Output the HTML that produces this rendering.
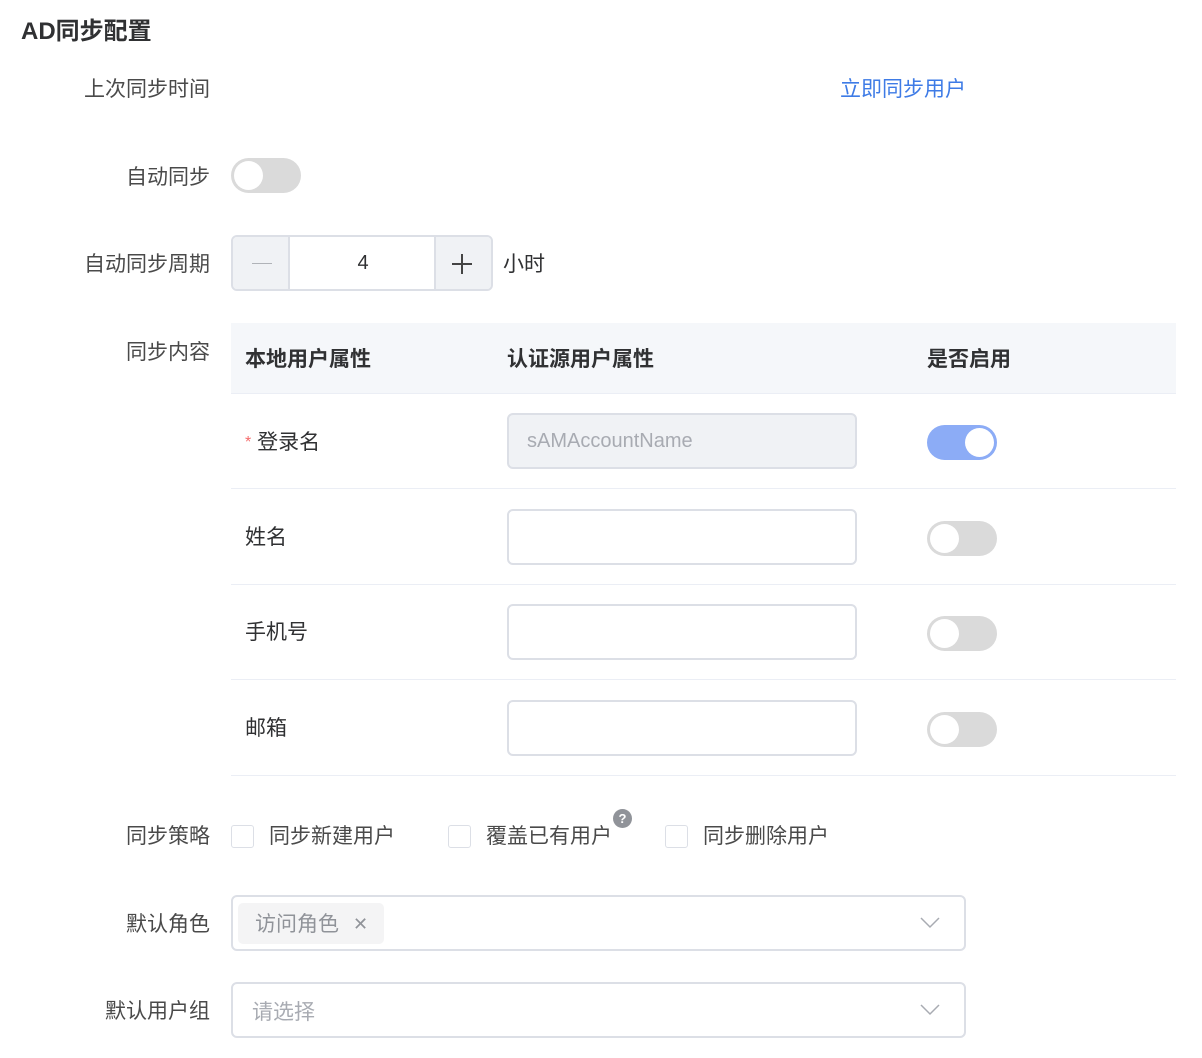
<!DOCTYPE html>
<html><head><meta charset="utf-8"><style>
*{box-sizing:border-box;margin:0;padding:0}
body{width:1202px;height:1058px;background:#fff;position:relative;overflow:hidden;font-family:"Liberation Sans","Noto Sans CJK SC",sans-serif;color:#303133;font-size:21px}
.a{position:absolute;white-space:nowrap;line-height:28px}
.lbl{position:absolute;right:992px;white-space:nowrap;line-height:28px;color:#4a4a4a}
.sw{position:absolute;width:70px;height:35px;border-radius:18px;background:#dadada}
.sw::after{content:"";position:absolute;top:3px;left:3px;width:29px;height:29px;border-radius:50%;background:#fff}
.sw.on{background:#8cacf6}.sw.on::after{left:38px}
.inp{position:absolute;left:507px;width:350px;height:56px;border:2px solid #dcdfe6;border-radius:6px;background:#fff}
.row{position:absolute;left:231px;width:945px;border-bottom:1px solid #ebeef5}
.cb{position:absolute;top:825px;width:23px;height:23px;border:1px solid #dcdfe6;border-radius:3px}
.sel{position:absolute;left:231px;width:735px;height:56px;border:2px solid #dcdfe6;border-radius:6px}
.chev{position:absolute;right:24px;top:20px}
</style></head><body>
<div class="a" style="left:21px;top:18px;font-size:24px;font-weight:bold;color:#303133">AD同步配置</div>
<div class="lbl" style="top:76px">上次同步时间</div>
<div class="a" style="left:840px;top:76px;color:#3e7be6">立即同步用户</div>
<div class="lbl" style="top:164px">自动同步</div>
<div class="sw" style="left:231px;top:158px"></div>
<div class="lbl" style="top:251px">自动同步周期</div>
<div style="position:absolute;left:231px;top:235px;width:262px;height:56px;border:2px solid #dcdfe6;border-radius:6px;background:#fff;overflow:hidden">
 <div style="position:absolute;left:0;top:0;width:57px;height:52px;background:#f0f2f5;border-right:2px solid #dcdfe6"></div>
 <div style="position:absolute;left:19px;top:26px;width:20px;height:1px;background:#b0b3b8"></div>
 <div style="position:absolute;right:0;top:0;width:57px;height:52px;background:#f0f2f5;border-left:2px solid #dcdfe6"></div>
 <div style="position:absolute;right:19px;top:26px;width:20px;height:2px;background:#444"></div>
 <div style="position:absolute;right:28px;top:17px;width:2px;height:20px;background:#444"></div>
 <div class="a" style="left:0;width:260px;text-align:center;top:12px;color:#303133;font-size:20px">4</div>
</div>
<div class="a" style="left:503px;top:251px">小时</div>
<div class="lbl" style="top:339px">同步内容</div>
<div class="row" style="top:323px;height:71px;background:#f5f7fa"></div>
<div class="a" style="left:245px;top:346px;font-weight:bold">本地用户属性</div>
<div class="a" style="left:507px;top:346px;font-weight:bold">认证源用户属性</div>
<div class="a" style="left:927px;top:346px;font-weight:bold">是否启用</div>
<div class="row" style="top:394px;height:95px"></div>
<div class="row" style="top:489px;height:96px"></div>
<div class="row" style="top:585px;height:95px"></div>
<div class="row" style="top:680px;height:96px"></div>
<div class="a" style="left:245px;top:429px"><span style="color:#f56c6c;font-size:16px;vertical-align:top">*</span> 登录名</div>
<div class="inp" style="top:413px;background:#f0f2f5"><span class="a" style="left:18px;top:12px;color:#a8abb2;font-size:20px">sAMAccountName</span></div>
<div class="sw on" style="left:927px;top:425px"></div>
<div class="a" style="left:245px;top:524px">姓名</div>
<div class="inp" style="top:509px"></div>
<div class="sw" style="left:927px;top:521px"></div>
<div class="a" style="left:245px;top:619px">手机号</div>
<div class="inp" style="top:604px"></div>
<div class="sw" style="left:927px;top:616px"></div>
<div class="a" style="left:245px;top:715px">邮箱</div>
<div class="inp" style="top:700px"></div>
<div class="sw" style="left:927px;top:712px"></div>
<div class="lbl" style="top:823px">同步策略</div>
<div class="cb" style="left:231px"></div><div class="a" style="left:269px;top:823px;color:#4a4a4a">同步新建用户</div>
<div class="cb" style="left:448px"></div><div class="a" style="left:486px;top:823px;color:#4a4a4a">覆盖已有用户</div>
<div style="position:absolute;left:613px;top:809px;width:19px;height:19px;border-radius:50%;background:#909399;color:#fff;font-size:13px;font-weight:bold;text-align:center;line-height:19px">?</div>
<div class="cb" style="left:665px"></div><div class="a" style="left:703px;top:823px;color:#4a4a4a">同步删除用户</div>
<div class="lbl" style="top:911px">默认角色</div>
<div class="sel" style="top:895px">
 <div style="position:absolute;left:5px;top:6px;width:146px;height:41px;background:#f4f4f5;border-radius:5px"></div>
 <div class="a" style="left:22px;top:14px;color:#909399">访问角色</div>
 <div class="a" style="left:120px;top:13px;color:#909399;font-size:18px">✕</div>
 <svg class="chev" width="20" height="12" viewBox="0 0 20 12"><path d="M1 1l9 9 9-9" fill="none" stroke="#a8abb2" stroke-width="1.5"/></svg>
</div>
<div class="lbl" style="top:998px">默认用户组</div>
<div class="sel" style="top:982px">
 <div class="a" style="left:19px;top:15px;color:#a8abb2">请选择</div>
 <svg class="chev" width="20" height="12" viewBox="0 0 20 12"><path d="M1 1l9 9 9-9" fill="none" stroke="#a8abb2" stroke-width="1.5"/></svg>
</div>
</body></html>
